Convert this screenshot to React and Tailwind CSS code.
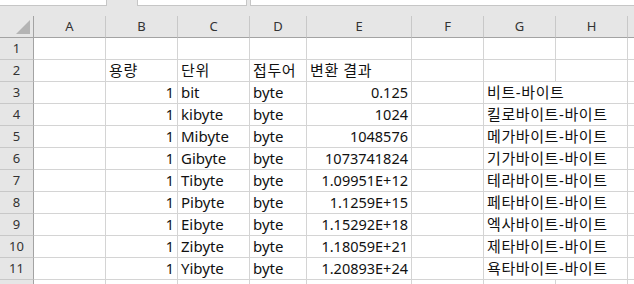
import React from "react";

const font = { fontFamily: '"Noto Sans", "Noto Sans CJK KR", sans-serif' };

const cols = ["A", "B", "C", "D", "E", "F", "G", "H", ""];

const data = [
  ["1", "bit", "0.125", "비트-바이트"],
  ["1", "kibyte", "1024", "킬로바이트-바이트"],
  ["1", "Mibyte", "1048576", "메가바이트-바이트"],
  ["1", "Gibyte", "1073741824", "기가바이트-바이트"],
  ["1", "Tibyte", "1.09951E+12", "테라바이트-바이트"],
  ["1", "Pibyte", "1.1259E+15", "페타바이트-바이트"],
  ["1", "Eibyte", "1.15292E+18", "엑사바이트-바이트"],
  ["1", "Zibyte", "1.18059E+21", "제타바이트-바이트"],
  ["1", "Yibyte", "1.20893E+24", "욕타바이트-바이트"],
];

function Cell({ children, right, num, span, ko }) {
  return (
    <div
      className={
        "h-[22px] border-r border-b border-[#d4d4d4] bg-white whitespace-nowrap leading-[21px] text-[#111] px-[3px] " +
        (right ? "text-right " : "text-left ") +
        (num ? "text-[14.5px] " : "text-[15px] ") +
        (ko ? "tracking-[0.6px] " : "") +
        (span ? "col-span-2" : "")
      }
    >
      {children}
    </div>
  );
}

function RowHead({ n }) {
  return (
    <div className="h-[22px] border-r border-r-[#a3a3a3] border-b border-b-[#c8c8c8] bg-[#e6e6e6] flex items-center justify-center text-[13px] text-[#333]">
      {n}
    </div>
  );
}

export default function App() {
  const rows = [];
  rows.push(
    <React.Fragment key="r1">
      <RowHead n={1} />
      {cols.map((c, i) => (
        <Cell key={i} />
      ))}
    </React.Fragment>
  );
  rows.push(
    <React.Fragment key="r2">
      <RowHead n={2} />
      <Cell />
      <Cell ko>용량</Cell>
      <Cell ko>단위</Cell>
      <Cell ko>접두어</Cell>
      <Cell ko>변환 결과</Cell>
      <Cell />
      <Cell />
      <Cell />
      <Cell />
    </React.Fragment>
  );
  data.forEach((d, i) => {
    rows.push(
      <React.Fragment key={"d" + i}>
        <RowHead n={i + 3} />
        <Cell />
        <Cell right num>{d[0]}</Cell>
        <Cell>{d[1]}</Cell>
        <Cell>byte</Cell>
        <Cell right num>{d[2]}</Cell>
        <Cell />
        <Cell span ko>{d[3]}</Cell>
        <Cell />
      </React.Fragment>
    );
  });
  rows.push(
    <React.Fragment key="r12">
      <RowHead n="" />
      {cols.map((c, i) => (
        <Cell key={i} />
      ))}
    </React.Fragment>
  );

  return (
    <div className="w-[634px] h-[284px] overflow-hidden bg-[#e6e6e6]" style={font}>
      <div className="h-[16px] flex items-start">
        <div className="w-[107px] h-[6px] bg-white border-r border-b border-[#c6c6c6]" />
        <div className="w-[30px]" />
        <div className="w-[110px] h-[6px] bg-white border-x border-b border-[#c6c6c6]" />
        <div className="w-[3px]" />
        <div className="flex-1 h-[6px] bg-white border-l border-b border-[#c6c6c6]" />
      </div>
      <div className="grid w-max grid-cols-[34px_72px_72px_72px_57px_105px_72px_72px_72px_72px]">
        <div className="relative h-[22px] border-r border-b border-[#a3a3a3] bg-[#e6e6e6]">
          <svg className="absolute left-0 top-0" width="33" height="21">
            <polygon points="30,4 30,18 16,18" fill="#b4b4b4" />
          </svg>
        </div>
        {cols.map((c, i) => (
          <div
            key={i}
            className="h-[22px] border-r border-r-[#c8c8c8] border-b border-b-[#a3a3a3] bg-[#e6e6e6] flex items-center justify-center text-[13px] text-[#333]"
          >
            {c}
          </div>
        ))}
        {rows}
      </div>
    </div>
  );
}
